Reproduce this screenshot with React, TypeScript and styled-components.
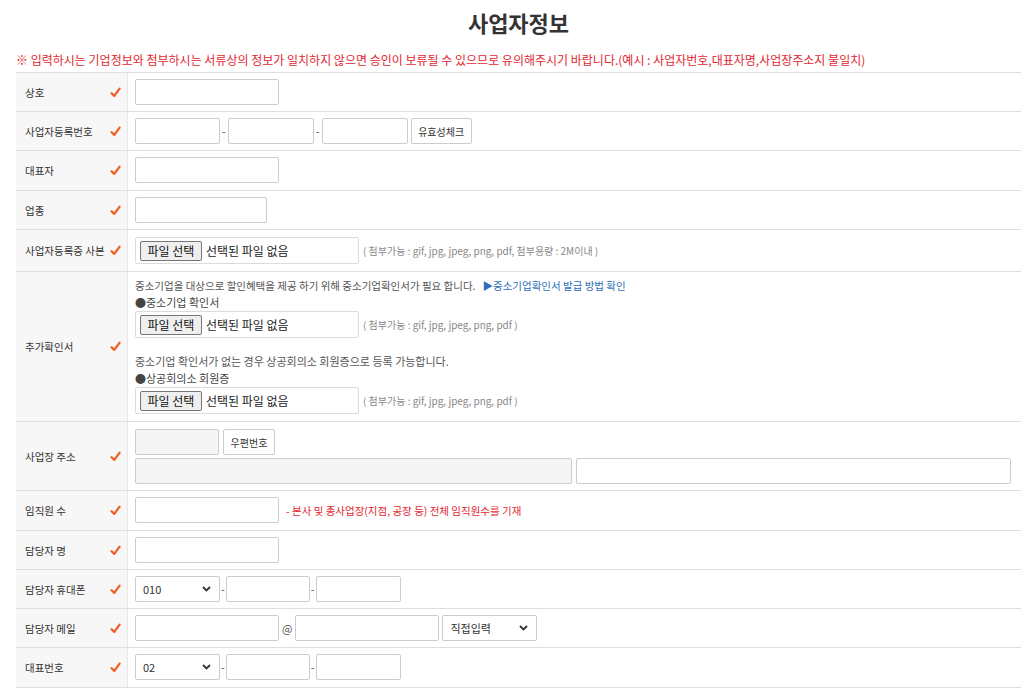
import React from "react";
import styled, { createGlobalStyle } from "styled-components";

const GlobalStyle = createGlobalStyle`
  html, body { margin: 0; padding: 0; background: #fff; }
  body {
    font-family: "Noto Sans CJK KR", "Noto Sans", "Liberation Sans", sans-serif;
    color: #333;
  }
  * { box-sizing: border-box; }
`;

const Page = styled.div`
  padding: 0 5px 0 16px;
`;

const Title = styled.h2`
  margin: 0;
  padding-top: 7px;
  line-height: 30px;
  text-align: center;
  font-size: 22px;
  font-weight: 700;
  color: #333;
`;

const Warning = styled.p`
  margin: 15px 0 4px;
  line-height: 16px;
  font-size: 12px;
  color: #e3262f;
  white-space: nowrap;
`;

const Table = styled.div`
  border-top: 1px solid #dedede;
`;

const Row = styled.div`
  display: grid;
  grid-template-columns: 112px 1fr;
  border-bottom: 1px solid #dedede;
`;

const Label = styled.div`
  display: flex;
  align-items: center;
  justify-content: space-between;
  padding: 0 6px 0 9px;
  background: #f7f7f7;
  border-right: 1px solid #e6e6e6;
  font-size: 10.5px;
  color: #333;
  white-space: nowrap;
`;

const Value = styled.div<{ $pt?: number; $pb?: number }>`
  display: flex;
  flex-direction: column;
  align-items: flex-start;
  padding: ${(p) => p.$pt ?? 6}px 6px ${(p) => p.$pb ?? 6}px 7px;
  font-size: 11px;
`;

const Line = styled.div<{ $gap?: number; $mt?: number }>`
  display: flex;
  align-items: center;
  gap: ${(p) => p.$gap ?? 4}px;
  margin-top: ${(p) => p.$mt ?? 0}px;
`;

const TextInput = styled.input<{ $w: number; $gray?: boolean }>`
  width: ${(p) => p.$w}px;
  height: 26px;
  border: 1px solid #cccccc;
  border-radius: 2px;
  background: ${(p) => (p.$gray ? "#f5f5f5" : "#fff")};
  padding: 0 6px;
  font: inherit;
  outline: none;
`;

const SmallButton = styled.button<{ $w: number; $ml?: number }>`
  width: ${(p) => p.$w}px;
  height: 26px;
  margin-left: ${(p) => p.$ml ?? 0}px;
  border: 1px solid #cccccc;
  border-radius: 2px;
  background: #fff;
  font-family: inherit;
  font-size: 10px;
  color: #333;
  padding: 0;
`;

const Sep = styled.span`
  font-size: 11px;
  color: #555;
`;

const FileBox = styled.div`
  display: flex;
  align-items: center;
  gap: 4px;
  width: 224px;
  height: 27px;
  padding: 0 4px;
  border: 1px solid #dcdcdc;
  border-radius: 2px;
  font-size: 12px;
  color: #222;
`;

const FileButton = styled.span`
  display: inline-flex;
  align-items: center;
  justify-content: center;
  height: 20px;
  width: 62px;
  border: 1px solid #767676;
  border-radius: 2px;
  background: #efefef;
  font-size: 12px;
  color: #111;
`;

const Hint = styled.span`
  font-size: 10px;
  color: #888;
`;

const Note = styled.div<{ $color?: string; $size?: number }>`
  line-height: 16px;
  font-size: ${(p) => p.$size ?? 11}px;
  color: ${(p) => p.$color ?? "#555"};
`;

const Link = styled.a`
  margin-left: 7px;
  color: #2f6fb7;
  text-decoration: none;
`;

const RedNote = styled.span`
  margin-left: 3px;
  font-size: 10.5px;
  color: #e3262f;
`;

const SelectWrap = styled.div<{ $w: number }>`
  position: relative;
  width: ${(p) => p.$w}px;
  height: 26px;
`;

const Select = styled.select`
  appearance: none;
  width: 100%;
  height: 100%;
  border: 1px solid #cccccc;
  border-radius: 2px;
  background: #fff;
  padding: 0 0 0 7px;
  font-family: inherit;
  font-size: 11px;
  color: #333;
  outline: none;
`;

const Chevron = styled.svg`
  position: absolute;
  right: 9px;
  top: 10px;
  pointer-events: none;
`;

const Check = () => (
  <svg width="11" height="11" viewBox="0 0 11 11">
    <path
      d="M1.6 6.2 L4.3 8.9 L9.6 1.6"
      fill="none"
      stroke="#f0612a"
      strokeWidth="2.3"
      strokeLinecap="round"
      strokeLinejoin="round"
    />
  </svg>
);

const Dropdown = ({ w, value, options }: { w: number; value: string; options: string[] }) => (
  <SelectWrap $w={w}>
    <Select defaultValue={value}>
      {options.map((o) => (
        <option key={o}>{o}</option>
      ))}
    </Select>
    <Chevron width="9" height="6" viewBox="0 0 9 6">
      <path d="M1 1 L4.5 4.5 L8 1" fill="none" stroke="#333" strokeWidth="1.8" />
    </Chevron>
  </SelectWrap>
);

const FileField = ({ hint }: { hint: string }) => (
  <Line $gap={4}>
    <FileBox>
      <FileButton>파일 선택</FileButton>
      <span>선택된 파일 없음</span>
    </FileBox>
    <Hint>{hint}</Hint>
  </Line>
);

const LabelCell = ({ children }: { children: React.ReactNode }) => (
  <Label>
    <span>{children}</span>
    <Check />
  </Label>
);

export default function App() {
  return (
    <Page>
      <GlobalStyle />
      <Title>사업자정보</Title>
      <Warning>
        ※ 입력하시는 기업정보와 첨부하시는 서류상의 정보가 일치하지 않으면 승인이 보류될 수 있으므로 유의해주시기 바랍니다.(예시 : 사업자번호,대표자명,사업장주소지 불일치)
      </Warning>
      <Table>
        <Row>
          <LabelCell>상호</LabelCell>
          <Value>
            <TextInput $w={144} />
          </Value>
        </Row>
        <Row>
          <LabelCell>사업자등록번호</LabelCell>
          <Value>
            <Line $gap={2}>
              <TextInput $w={85} />
              <Sep>-</Sep>
              <TextInput $w={86} />
              <Sep>-</Sep>
              <TextInput $w={86} />
              <SmallButton $w={61} $ml={1}>유효성체크</SmallButton>
            </Line>
          </Value>
        </Row>
        <Row>
          <LabelCell>대표자</LabelCell>
          <Value $pb={7}>
            <TextInput $w={144} />
          </Value>
        </Row>
        <Row>
          <LabelCell>업종</LabelCell>
          <Value>
            <TextInput $w={132} />
          </Value>
        </Row>
        <Row>
          <LabelCell>사업자등록증 사본</LabelCell>
          <Value $pt={7} $pb={7}>
            <FileField hint="( 첨부가능 : gif, jpg, jpeg, png, pdf, 첨부용량 : 2M이내 )" />
          </Value>
        </Row>
        <Row>
          <LabelCell>추가확인서</LabelCell>
          <Value $pt={6} $pb={7}>
            <Note $size={10.5}>
              중소기업을 대상으로 할인혜택을 제공 하기 위해 중소기업확인서가 필요 합니다.
              <Link href="#">▶중소기업확인서 발급 방법 확인</Link>
            </Note>
            <Note $color="#444">●중소기업 확인서</Note>
            <Line $mt={1}>
              <FileField hint="( 첨부가능 : gif, jpg, jpeg, png, pdf )" />
            </Line>
            <Line $mt={15}>
              <Note>중소기업 확인서가 없는 경우 상공회의소 회원증으로 등록 가능합니다.</Note>
            </Line>
            <Line $mt={1}>
              <Note $color="#444">●상공회의소 회원증</Note>
            </Line>
            <Line $mt={1}>
              <FileField hint="( 첨부가능 : gif, jpg, jpeg, png, pdf )" />
            </Line>
          </Value>
        </Row>
        <Row>
          <LabelCell>사업장 주소</LabelCell>
          <Value $pt={7} $pb={6}>
            <Line $gap={4}>
              <TextInput $w={84} $gray />
              <SmallButton $w={52}>우편번호</SmallButton>
            </Line>
            <Line $gap={4} $mt={3}>
              <TextInput $w={437} $gray />
              <TextInput $w={435} />
            </Line>
          </Value>
        </Row>
        <Row>
          <LabelCell>임직원 수</LabelCell>
          <Value $pb={7}>
            <Line $gap={4}>
              <TextInput $w={144} />
              <RedNote>- 본사 및 종사업장(지점, 공장 등) 전체 임직원수를 기재</RedNote>
            </Line>
          </Value>
        </Row>
        <Row>
          <LabelCell>담당자 명</LabelCell>
          <Value>
            <TextInput $w={144} />
          </Value>
        </Row>
        <Row>
          <LabelCell>담당자 휴대폰</LabelCell>
          <Value>
            <Line $gap={1}>
              <Dropdown w={85} value="010" options={["010", "011", "016", "017", "018", "019"]} />
              <Sep>-</Sep>
              <TextInput $w={84} />
              <Sep>-</Sep>
              <TextInput $w={85} />
            </Line>
          </Value>
        </Row>
        <Row>
          <LabelCell>담당자 메일</LabelCell>
          <Value>
            <Line $gap={3}>
              <TextInput $w={144} />
              <Sep>@</Sep>
              <TextInput $w={144} />
              <Dropdown w={95} value="직접입력" options={["직접입력", "naver.com", "gmail.com"]} />
            </Line>
          </Value>
        </Row>
        <Row>
          <LabelCell>대표번호</LabelCell>
          <Value $pb={7}>
            <Line $gap={1}>
              <Dropdown w={85} value="02" options={["02", "031", "032", "051"]} />
              <Sep>-</Sep>
              <TextInput $w={84} />
              <Sep>-</Sep>
              <TextInput $w={85} />
            </Line>
          </Value>
        </Row>
      </Table>
    </Page>
  );
}
